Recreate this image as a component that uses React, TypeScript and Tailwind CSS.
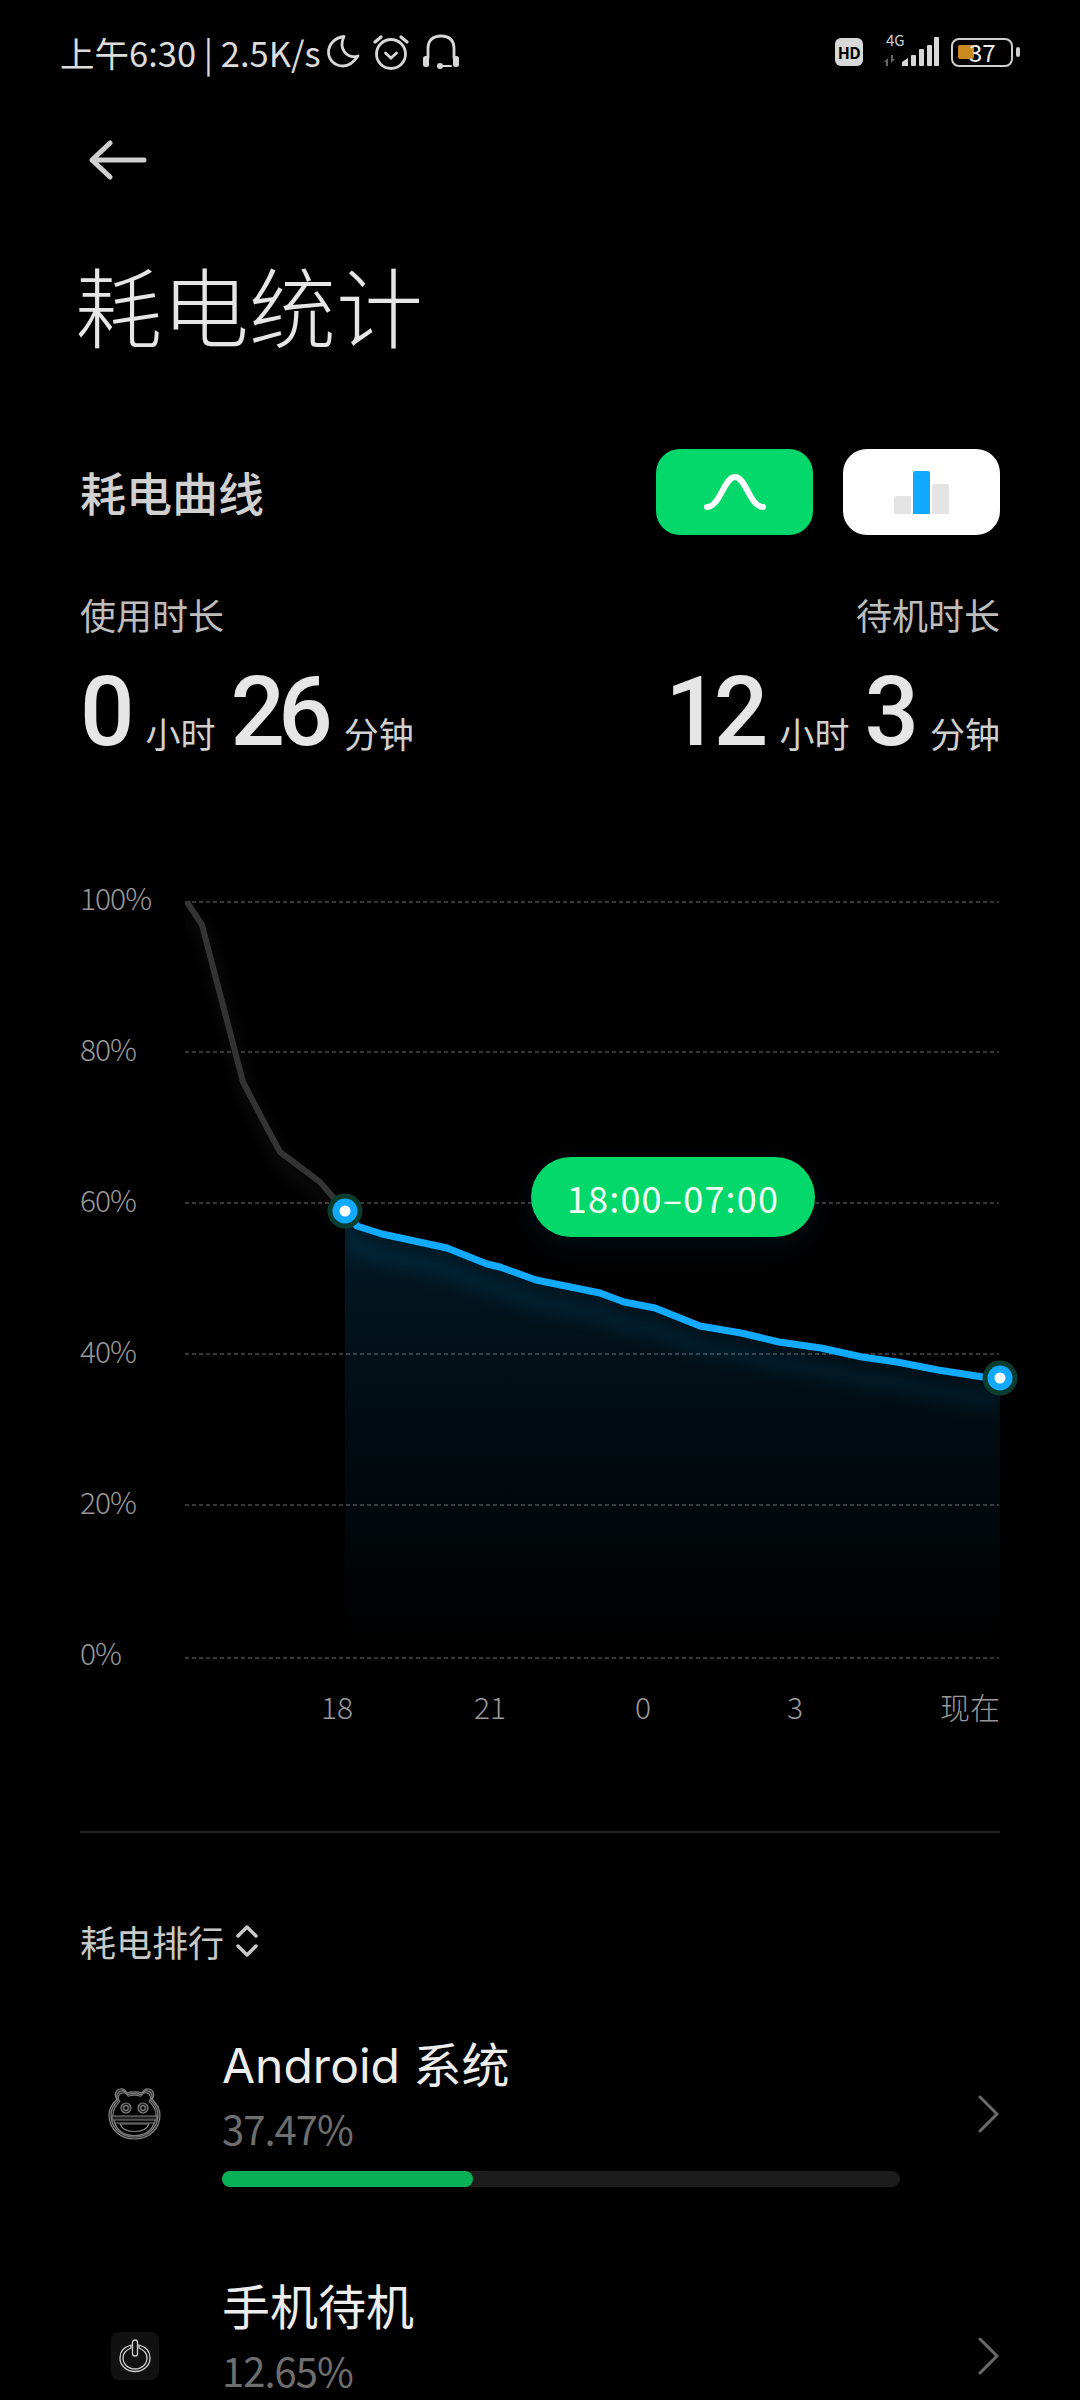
const yLabels = ["100%", "80%", "60%", "40%", "20%", "0%"];
const xLabels = [
  { text: "18", className: "w-[52px] ml-[311px]" },
  { text: "21", className: "w-[52px] ml-[101px]" },
  { text: "0", className: "w-[52px] ml-[101px]" },
  { text: "3", className: "w-[52px] ml-[100px]" },
];

// chart coords are page coords minus (185, 880)
const toPath = (pts: number[][]) =>
  pts.map((p, i) => `${i === 0 ? "M" : "L"}${p[0] - 185} ${p[1] - 880}`).join(" ");

const grayPts = [
  [187, 902], [202, 925], [243, 1082], [267, 1128], [280, 1152], [320, 1182], [345, 1211],
];
const bluePts = [
  [345, 1211], [357, 1226], [382, 1234], [447, 1248], [487, 1264], [500, 1267], [536, 1280],
  [600, 1293], [624, 1302], [655, 1308], [700, 1326], [741, 1333], [779, 1342], [821, 1348],
  [862, 1357], [897, 1362], [938, 1370], [983, 1377], [1000, 1378],
];

function StatusBar() {
  return (
    <div className="flex h-[104px] items-center justify-between pl-[60px] pr-[60px] text-[#dcdcdc]">
      <div className="flex items-center">
        <span className="text-[34.5px] leading-none whitespace-nowrap">上午6:30 | 2.5K/s</span>
        <svg className="ml-[6px]" width="34" height="34" viewBox="0 0 34 34" fill="none" stroke="#d8d8d8" strokeWidth="2.8" strokeLinejoin="round">
          <path d="M17 1.500 C7 3 1.500 10 1.500 17 C1.500 25 8 31 16 31 C22 31 27 27 31 21 C20 24 11 14 17 1.500 Z" />
        </svg>
        <svg className="ml-[12px]" width="36" height="36" viewBox="0 0 36 36" fill="none" stroke="#d8d8d8" strokeWidth="2.8" strokeLinecap="round">
          <circle cx="18" cy="20" r="14.5" />
          <path d="M2 8 L8 3 M34 8 L28 3" strokeWidth="3.2" />
          <path d="M12.5 19 L18 24 L23.5 19" />
        </svg>
        <svg className="ml-[13px]" width="38" height="36" viewBox="0 0 38 36" fill="none" stroke="#d8d8d8" strokeWidth="2.8" strokeLinecap="round">
          <path d="M6 24 V15 C6 6 11 2 19 2 C27 2 32 6 32 15 V24" />
          <rect x="1" y="22" width="6" height="11" rx="2.5" fill="#d8d8d8" stroke="none" />
          <rect x="31" y="22" width="6" height="11" rx="2.5" fill="#d8d8d8" stroke="none" />
          <path d="M19 32 H29" strokeWidth="2" />
          <circle cx="18" cy="32" r="3" fill="#d8d8d8" stroke="none" />
        </svg>
      </div>
      <div className="flex items-center">
        <span className="flex h-[28px] w-[28px] items-center justify-center rounded-[6px] bg-[#d8d8d8] text-[16px] font-bold leading-none tracking-[-0.5px] text-black">HD</span>
        <div className="relative ml-[21px] h-[30px] w-[56px]">
          <span className="absolute left-[2px] top-[-6px] text-[15px] leading-[18px] text-[#cfcfcf]">4G</span>
          <svg className="absolute left-0 top-0" width="56" height="30" viewBox="0 0 56 30" fill="#d8d8d8">
            <path d="M4 29 V21 L0 25 H2 V29 Z M7 18 V26 L11 22 H9 V18 Z" fill="#666" />
            <path d="M18 29 V25 L24 21 V29 Z" />
            <rect x="27" y="18" width="5" height="11" rx="1" />
            <rect x="35" y="12" width="5" height="17" rx="1" />
            <rect x="43" y="8" width="5" height="21" rx="1" />
            <rect x="50" y="0" width="5" height="29" rx="1" />
          </svg>
        </div>
        <div className="relative ml-[11px] flex h-[29px] w-[62px] items-center rounded-[8px] border-[2.5px] border-[#cfcfcf] px-[5px]">
          <div className="h-[14px] w-[16px] rounded-[2px] bg-[#c98a1f]" />
          <span className="absolute left-[16px] top-0 text-[24px] leading-[24px] text-[#eee]">37</span>
        </div>
        <div className="ml-[3px] h-[10px] w-[4px] rounded-full bg-[#cfcfcf]" />
      </div>
    </div>
  );
}

function Duration({ a, b }: { a: string; b: string }) {
  return (
    <div className="flex items-end">
      <span className="font-['Roboto',sans-serif] text-[96px] font-medium leading-[84px] tracking-[-6px] text-[#e6e6e6]">{a}</span>
      <span className="mb-[-1px] ml-[17px] text-[35px] leading-[44px] text-[#d0d0d0]">小时</span>
      <span className="ml-[15px] font-['Roboto',sans-serif] text-[96px] font-medium leading-[84px] tracking-[-7px] text-[#e6e6e6]">{b}</span>
      <span className="mb-[-1px] ml-[18px] text-[35px] leading-[44px] text-[#d0d0d0]">分钟</span>
    </div>
  );
}

function Chart() {
  return (
    <div className="relative mt-[126px] flex pl-[80px]">
      <div className="mt-[-3px] flex w-[105px] flex-col gap-[111px] text-[30px] font-light leading-[40px] tracking-[-1px] text-[#999]">
        {yLabels.map((l) => (
          <span key={l} className="h-[40px]">{l}</span>
        ))}
      </div>
      <svg width="895" height="800" viewBox="0 0 895 800" className="absolute left-[185px] top-0" fill="none">
        <defs>
          <linearGradient id="area" x1="0" y1="0" x2="0" y2="1">
            <stop offset="0" stopColor="#11aaff" stopOpacity="0.16" />
            <stop offset="0.35" stopColor="#11aaff" stopOpacity="0.09" />
            <stop offset="1" stopColor="#11aaff" stopOpacity="0" />
          </linearGradient>
          <filter id="soft" x="-10%" y="-30%" width="120%" height="160%">
            <feGaussianBlur stdDeviation="7" />
          </filter>
          <clipPath id="areaClip">
            <rect x="160" y="300" width="655" height="480" />
          </clipPath>
        </defs>
        {[22, 172, 323, 474, 625, 778].map((y) => (
          <line key={y} x1="0" x2="814" y1={y} y2={y} stroke="#4a4a4a" strokeWidth="1.3" strokeDasharray="4 3" />
        ))}
        <path d={`${toPath(bluePts)} L815 770 L160 770 Z`} fill="url(#area)" />
        <g clipPath="url(#areaClip)">
          <path d={toPath(bluePts)} transform="translate(0 22)" stroke="#11aaff" strokeOpacity="0.08" strokeWidth="18" filter="url(#soft)" />
        </g>
        <path d={toPath(grayPts)} transform="translate(4 14)" stroke="#fff" strokeOpacity="0.04" strokeWidth="14" filter="url(#soft)" />
        <path d={toPath(grayPts)} stroke="#333" strokeWidth="6" strokeLinejoin="round" />
        <path d={toPath(bluePts)} stroke="#11aaff" strokeWidth="7" strokeLinejoin="round" />
        <circle cx="160" cy="331" r="17.5" fill="#0b3d2f" />
        <circle cx="160" cy="331" r="12.5" fill="#11aaff" />
        <circle cx="160" cy="331" r="5.5" fill="#fff" />
        <circle cx="815" cy="498" r="17.5" fill="#0b3d2f" />
        <circle cx="815" cy="498" r="12.5" fill="#11aaff" />
        <circle cx="815" cy="498" r="5.5" fill="#fff" />
      </svg>
      <div className="absolute left-[531px] top-[277px] flex h-[80px] w-[284px] items-center justify-center rounded-full bg-[#04d86a] text-[36px] tracking-[1.2px] text-[#f0fff6] shadow-[0_10px_30px_rgba(17,170,255,0.08)]">
        18:00–07:00
      </div>
    </div>
  );
}

function AppRow({ icon, title, pct, bar }: { icon: React.ReactNode; title: string; pct: string; bar: number }) {
  return (
    <div className="flex items-center pl-[80px] pr-[80px]">
      <div className="mt-[9px] flex w-[142px] shrink-0 items-center justify-start pl-[27px]">{icon}</div>
      <div className="flex-1">
        <div className="font-['Inter','Noto_Sans_CJK_SC',sans-serif] text-[48px] leading-[69px] text-[#ededed]">{title}</div>
        <div className="text-[40px] leading-[56px] tracking-[-1px] text-[#6e6e6e]">{pct}</div>
        <div className="mt-[15px] h-[16px] w-[678px] rounded-full bg-[#1c1c1c]">
          <div className="h-full rounded-full bg-[#08b058]" style={{ width: `${bar}%` }} />
        </div>
      </div>
      <svg className="mt-[9px]" width="22" height="38" viewBox="0 0 22 38" fill="none" stroke="#6a6a6a" strokeWidth="3" strokeLinecap="round" strokeLinejoin="round">
        <path d="M2 2 L19 19 L2 36" />
      </svg>
    </div>
  );
}

function AndroidIcon() {
  const head = "M10 14 C7 11 8 5 13 4 C17 3 19 6 20 8 C24 6.500 31 6.500 35 8 C36 6 38 3 42 4 C47 5 48 11 45 14 C50 19 53 24 53 30 C53 44 42 54 27.500 54 C13 54 2 44 2 30 C2 24 5 19 10 14 Z";
  return (
    <svg width="55" height="58" viewBox="0 0 55 58" fill="none" stroke="#808080" strokeWidth="1.2">
      <path d={head} fill="#242424" />
      <path d={head} transform="translate(27.5 29) scale(0.92) translate(-27.5 -29)" fill="#242424" />
      <path d={head} transform="translate(27.5 29) scale(0.84) translate(-27.5 -29)" fill="#000" />
      <path d="M5 31 H50 V35 H5 Z" fill="#242424" />
      <path d="M8 38 H47 C45 46 37 50.500 27.500 50.500 C18 50.500 10 46 8 38 Z" fill="#000" />
      <path d="M13 39 H42 C40 44 34 46.500 27.500 46.500 C21 46.500 15 44 13 39 Z" />
      <circle cx="19" cy="23" r="5" fill="#222" />
      <circle cx="19" cy="23" r="2.300" fill="#000" />
      <circle cx="36" cy="23" r="5" fill="#222" />
      <circle cx="36" cy="23" r="2.300" fill="#000" />
    </svg>
  );
}

function PowerIcon() {
  return (
    <div className="ml-[4px] flex h-[48px] w-[48px] items-center justify-center rounded-[8px] bg-[#111]">
      <svg width="34" height="34" viewBox="0 0 34 34" fill="none" stroke="#cfcfcf" strokeWidth="1.3">
        <path d="M13 6 C6 8 2 13 2 19 C2 27 9 32.500 17 32.500 C25 32.500 32 27 32 19 C32 13 28 8 21 6 L21 9 C26 11 29 14 29 19 C29 25 24 30 17 30 C10 30 5 25 5 19 C5 14 8 11 13 9 Z" />
        <rect x="14.500" y="1" width="5" height="16" rx="2.500" />
      </svg>
    </div>
  );
}

export default function App() {
  return (
    <div className="h-[2400px] w-[1080px] overflow-hidden bg-black font-['Noto_Sans_CJK_SC','Noto_Sans',sans-serif]">
      <StatusBar />

      <svg className="ml-[89px] mt-[36px] block" width="58" height="40" viewBox="0 0 58 40" fill="none" stroke="#cfcfcf" strokeWidth="5" strokeLinecap="round" strokeLinejoin="round">
        <path d="M21 3 L3 20 L21 37 M3 20 H55" />
      </svg>

      <h1 className="ml-[75px] mt-[74px] text-[87px] font-light leading-[100px] text-[#e6e6e6]">耗电统计</h1>

      <div className="mt-[95px] flex items-center justify-between px-[80px]">
        <span className="mb-[2px] text-[46px] font-medium leading-[60px] text-[#d0d0d0]">耗电曲线</span>
        <div className="flex gap-[30px]">
          <div className="flex h-[86px] w-[157px] items-center justify-center rounded-[24px] bg-[#04d86a]">
            <svg width="62" height="38" viewBox="0 0 62 38" fill="none" stroke="#fff" strokeWidth="6" strokeLinecap="round">
              <path d="M3 34 C16 34 20 4 31 4 C42 4 46 34 59 34" />
            </svg>
          </div>
          <div className="flex h-[86px] w-[157px] items-end justify-center rounded-[24px] bg-white pb-[21px]">
            <div className="flex items-end gap-[2px]">
              <div className="h-[18px] w-[17px] rounded-t-[2px] bg-[#e4e4e4]" />
              <div className="h-[43px] w-[17px] rounded-t-[2px] bg-[#11aaff]" />
              <div className="h-[30px] w-[17px] rounded-t-[2px] bg-[#e4e4e4]" />
            </div>
          </div>
        </div>
      </div>

      <div className="mt-[54px] flex justify-between px-[80px]">
        <div>
          <div className="text-[36px] leading-[50px] text-[#bdbdbd]">使用时长</div>
          <div className="mt-[31px]">
            <Duration a="0" b="26" />
          </div>
        </div>
        <div className="flex flex-col items-end">
          <div className="text-[36px] leading-[50px] text-[#bdbdbd]">待机时长</div>
          <div className="mt-[31px]">
            <Duration a="12" b="3" />
          </div>
        </div>
      </div>

      <Chart />

      <div className="mt-[14px] flex text-[30px] font-light leading-[40px] text-[#999]">
        {xLabels.map((l) => (
          <span key={l.text} className={`${l.className} text-center`}>{l.text}</span>
        ))}
        <span className="ml-[119px]">现在</span>
      </div>

      <div className="mx-[80px] mt-[105px] h-[2px] bg-[#222]" />

      <div className="mt-[83px] flex items-center px-[80px]">
        <span className="text-[36px] leading-[50px] text-[#c8c8c8]">耗电排行</span>
        <svg className="ml-[11px]" width="24" height="34" viewBox="0 0 24 34" fill="none" stroke="#c8c8c8" strokeWidth="3.5" strokeLinecap="round" strokeLinejoin="round">
          <path d="M3 12 L12 3 L21 12 M3 22 L12 31 L21 22" />
        </svg>
      </div>

      <div className="mt-[65px] flex flex-col gap-[86px]">
        <AppRow icon={<AndroidIcon />} title="Android 系统" pct="37.47%" bar={37} />
        <AppRow icon={<PowerIcon />} title="手机待机" pct="12.65%" bar={12.65} />
      </div>
    </div>
  );
}
